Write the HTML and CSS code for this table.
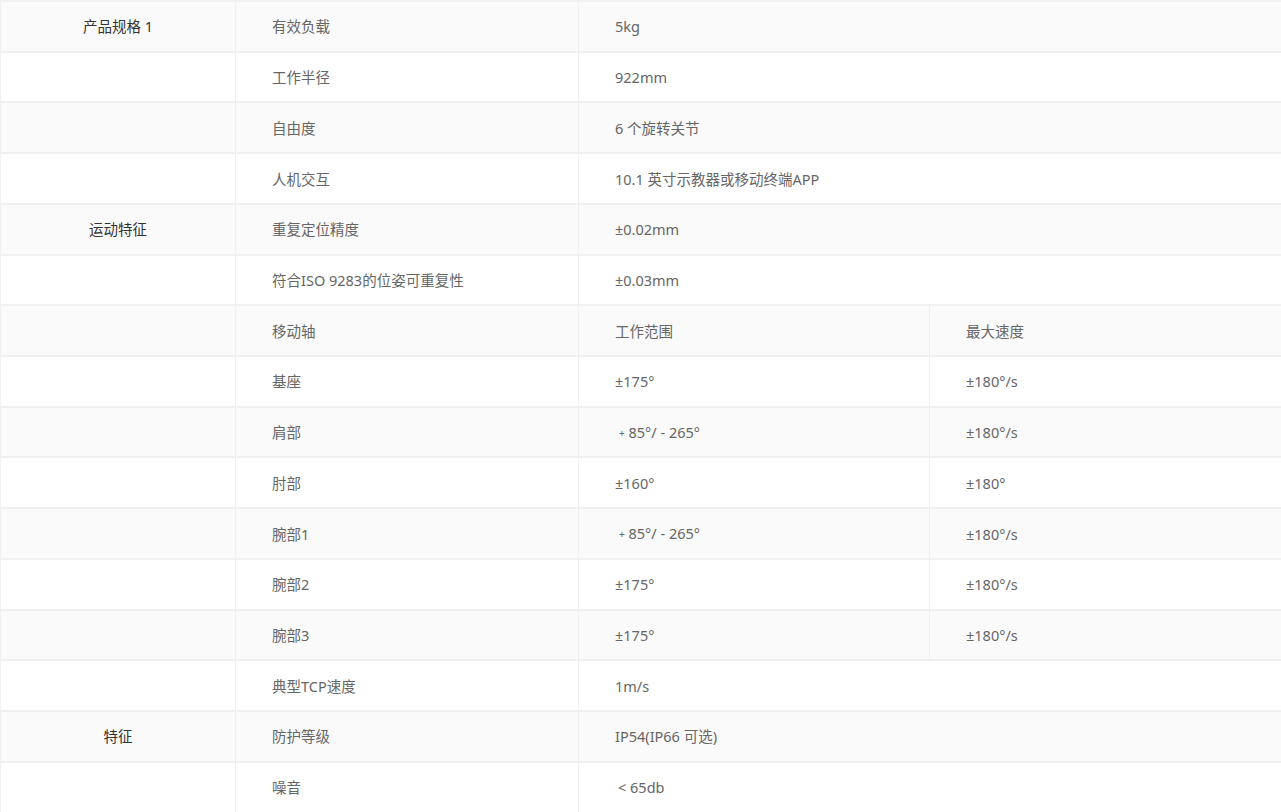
FILE: index.html
```html
<!DOCTYPE html>
<html lang="zh">
<head>
<meta charset="utf-8">
<title>产品规格</title>
<link rel="stylesheet" href="styles.css">
</head>
<body>
<table class="spec">
  <colgroup>
    <col class="c1"><col class="c2"><col class="c3"><col class="c4">
  </colgroup>
  <tbody>
    <tr><td class="cat">产品规格 1</td><td>有效负载</td><td colspan="2" class="last">5kg</td></tr>
    <tr><td class="cat"></td><td>工作半径</td><td colspan="2" class="last">922mm</td></tr>
    <tr><td class="cat"></td><td>自由度</td><td colspan="2" class="last">6 个旋转关节</td></tr>
    <tr><td class="cat"></td><td>人机交互</td><td colspan="2" class="last">10.1 英寸示教器或移动终端APP</td></tr>
    <tr><td class="cat">运动特征</td><td>重复定位精度</td><td colspan="2" class="last">±0.02mm</td></tr>
    <tr><td class="cat"></td><td>符合ISO 9283的位姿可重复性</td><td colspan="2" class="last">±0.03mm</td></tr>
    <tr><td class="cat"></td><td>移动轴</td><td>工作范围</td><td class="last">最大速度</td></tr>
    <tr><td class="cat"></td><td>基座</td><td>±175°</td><td class="last">±180°/s</td></tr>
    <tr><td class="cat"></td><td>肩部</td><td><span class="sp">+</span> 85°/ - 265°</td><td class="last">±180°/s</td></tr>
    <tr><td class="cat"></td><td>肘部</td><td>±160°</td><td class="last">±180°</td></tr>
    <tr><td class="cat"></td><td>腕部1</td><td><span class="sp">+</span> 85°/ - 265°</td><td class="last">±180°/s</td></tr>
    <tr><td class="cat"></td><td>腕部2</td><td>±175°</td><td class="last">±180°/s</td></tr>
    <tr><td class="cat"></td><td>腕部3</td><td>±175°</td><td class="last">±180°/s</td></tr>
    <tr><td class="cat"></td><td>典型TCP速度</td><td colspan="2" class="last">1m/s</td></tr>
    <tr><td class="cat">特征</td><td>防护等级</td><td colspan="2" class="last">IP54(IP66 可选)</td></tr>
    <tr><td class="cat"></td><td>噪音</td><td colspan="2" class="last"><span class="lead">&lt;</span> 65db</td></tr>
  </tbody>
</table>
</body>
</html>
```

FILE: styles.css
```css
html, body {
  margin: 0;
  padding: 0;
  background: #ffffff;
}

body {
  font-family: "Noto Sans", "Noto Sans CJK SC", sans-serif;
  font-size: 14.5px;
  color: #666666;
}

.spec {
  border-collapse: separate;
  border-spacing: 0;
  table-layout: fixed;
  width: 1281px;
  border-top: 1px solid #f0f0f0;
  border-left: 1px solid #f0f0f0;
}

.c1 { width: 235px; }
.c2 { width: 343px; }
.c3 { width: 351px; }
.c4 { width: 351px; }

.spec td {
  box-sizing: border-box;
  height: 50.73px;
  padding: 0 0 0 36px;
  border-top: 1px solid #f0f0f0;
  border-bottom: 1px solid #f0f0f0;
  border-right: 1px solid #f0f0f0;
  vertical-align: middle;
  line-height: 20px;
  white-space: nowrap;
}

.spec tr:nth-child(odd) td {
  background: #fafafa;
}

.spec td.cat {
  padding: 0;
  text-align: center;
  color: #333333;
}

.spec td.last {
  border-right: none;
}

.sp {
  font-size: 10px;
  vertical-align: 1px;
  margin-left: 4px;
}

.lead {
  margin-left: 3px;
}
```
